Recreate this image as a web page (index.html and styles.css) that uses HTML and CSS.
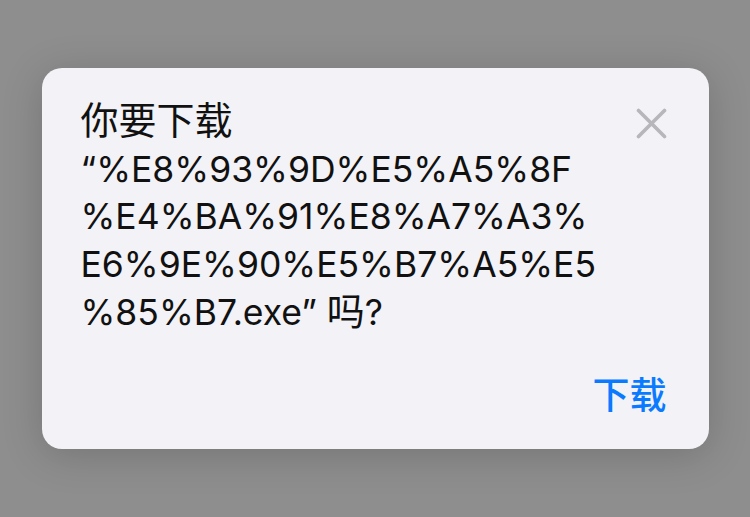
FILE: index.html
```html
<!DOCTYPE html>
<html lang="zh-CN">
<head>
<meta charset="utf-8">
<title>下载</title>
<link rel="stylesheet" href="styles.css">
</head>
<body>
<div class="dialog">
  <div class="head">
    <p class="msg"><span class="cjk">你要下载</span><br>“%E8%93%9D%E5%A5%8F<br>%E4%BA%91%E8%A7%A3%<br>E6%9E%90%E5%B7%A5%E5<br>%85%B7.exe” <span class="cjk">吗</span>?</p>
    <button class="close" aria-label="关闭">
      <svg width="31" height="31" viewBox="0 0 31 31"><path d="M2.5 2.5 L28.5 28.5 M28.5 2.5 L2.5 28.5" stroke="#b6b6bb" stroke-width="3.6" stroke-linecap="round" fill="none"/></svg>
    </button>
  </div>
  <div class="foot">
    <button class="action">下载</button>
  </div>
</div>
</body>
</html>
```
FILE: styles.css
```css
html, body {
  margin: 0;
  height: 100%;
}
body {
  background: #8e8e8e;
  display: flex;
  align-items: center;
  justify-content: center;
  font-family: Inter, "Noto Sans CJK SC", sans-serif;
}
.dialog {
  width: 667px;
  height: 381px;
  box-sizing: border-box;
  background: #f2f2f7;
  border-radius: 20px;
  box-shadow: 0 6px 40px rgba(0, 0, 0, 0.18);
  display: flex;
  flex-direction: column;
  padding: 29px 42px 30px 39px;
}
.head {
  display: flex;
  justify-content: space-between;
  align-items: flex-start;
}
.msg {
  margin: 0;
  font-size: 35.5px;
  line-height: 47.5px;
  color: #111;
}
.cjk {
  font-size: 38px;
}
.close {
  margin-top: 11px;
  padding: 0;
  border: 0;
  background: none;
  width: 31px;
  height: 31px;
  display: block;
}
.close svg { display: block; }
.foot {
  margin-top: auto;
  display: flex;
  justify-content: flex-end;
}
.action {
  border: 0;
  background: none;
  padding: 0;
  font-family: Inter, "Noto Sans CJK SC", sans-serif;
  font-size: 37px;
  line-height: 47.5px;
  font-weight: 500;
  color: #0a7aff;
}
```
